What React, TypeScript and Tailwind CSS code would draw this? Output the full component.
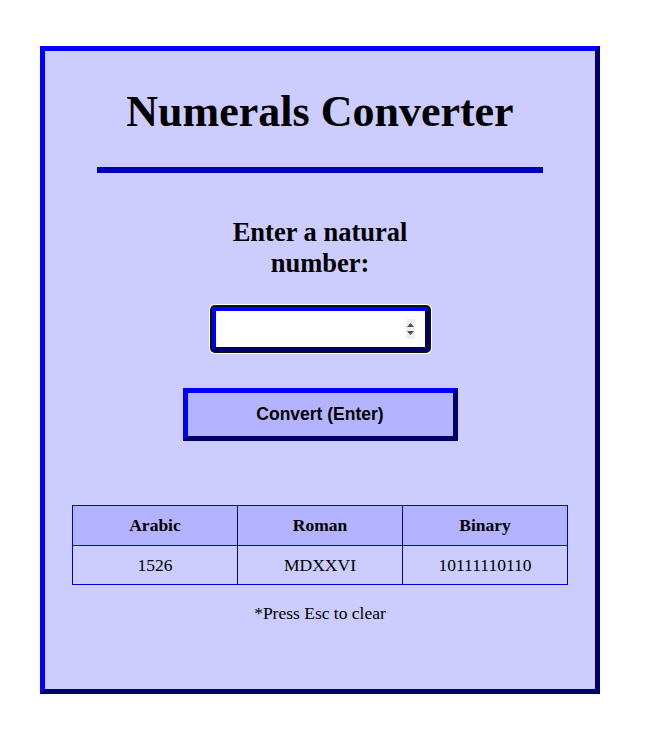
import { useState } from 'react'

const serif = "font-['Liberation_Serif','Times_New_Roman',serif]"

const rows = [{ arabic: '1526', roman: 'MDXXVI', binary: '10111110110' }]

function Spinner() {
  return (
    <div className="absolute right-[14px] top-[12px] w-[9px] h-[20px] bg-[#efefef] flex items-center justify-center">
      <svg width="9" height="20" viewBox="0 0 9 20">
        <path d="M1 8 L4.5 4 L8 8 Z" fill="#505050" />
        <path d="M1 12 L4.5 16 L8 12 Z" fill="#505050" />
      </svg>
    </div>
  )
}

export default function App() {
  const [value, setValue] = useState('')

  return (
    <div className={`${serif} text-[17.5px] text-black bg-white min-h-[749px] pt-[46px]`}>
      <div className="ml-[40px] w-[560px] h-[648px] bg-[#ccccff] border-[5px] border-t-[#0000ff] border-l-[#0000ff] border-r-[#000066] border-b-[#000066] flex flex-col items-center pt-[36px]">
        <h1 className="text-[44px] leading-[50px] font-bold">Numerals Converter</h1>

        <div className="mt-[30px] w-[446px] h-[6px] bg-[#0000bb]" />

        <h2 className="mt-[44px] w-[200px] text-center text-[26.5px] leading-[31px] font-bold">
          Enter a natural number:
        </h2>

        <div className="relative mt-[28px]">
          <input
            type="text"
            value={value}
            onChange={(e) => setValue(e.target.value)}
            className="block w-[217px] h-[44px] bg-white border-4 border-t-[#0000ff] border-l-[#0000ff] border-r-[#000066] border-b-[#000066] rounded-[3px] shadow-[0_0_0_2px_#101010,0_0_0_3px_#ffffff] outline-none px-2 text-[17px]"
          />
          <Spinner />
        </div>

        <button className="mt-[37px] w-[275px] h-[53px] bg-[#b3b3ff] border-[5px] border-t-[#0000ff] border-l-[#0000ff] border-r-[#000066] border-b-[#000066] font-['Liberation_Sans',Arial,sans-serif] font-bold text-[17.5px] text-black">
          Convert (Enter)
        </button>

        <div className="mt-[64px] w-[496px] border-t border-l border-[#0000cc]">
          <div className="grid grid-cols-3 bg-[#b3b3ff]">
            {['Arabic', 'Roman', 'Binary'].map((h) => (
              <div key={h} className="h-[40px] flex items-center justify-center font-bold border-r border-b border-[#0000cc]">
                {h}
              </div>
            ))}
          </div>
          {rows.map((r, i) => (
            <div key={i} className="grid grid-cols-3">
              {[r.arabic, r.roman, r.binary].map((c, j) => (
                <div key={j} className="h-[39px] flex items-center justify-center border-r border-b border-[#0000cc]">
                  {c}
                </div>
              ))}
            </div>
          ))}
        </div>

        <p className="mt-[18px] leading-[20px]">*Press Esc to clear</p>
      </div>
    </div>
  )
}
